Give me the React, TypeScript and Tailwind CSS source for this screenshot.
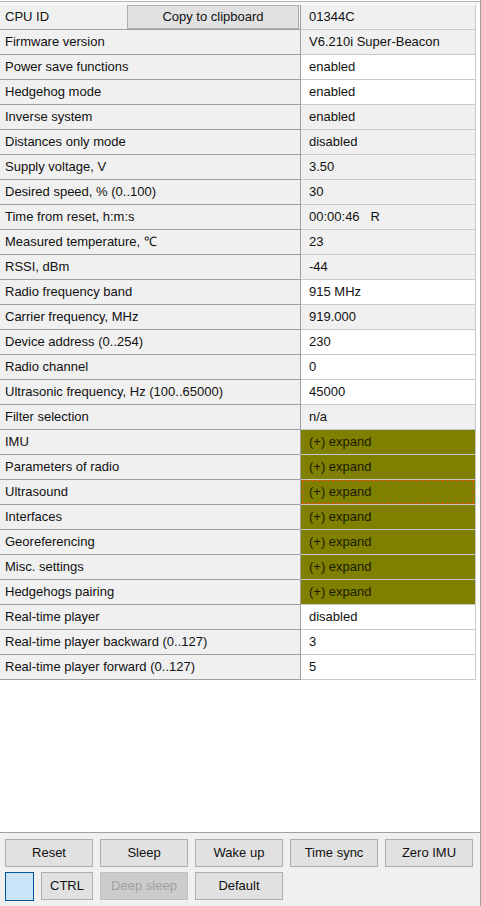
import React from "react";

type Row = {
  name: string;
  value: string;
  kind?: "white" | "gray" | "group";
  focus?: boolean;
};

const rows: Row[] = [
  { name: "Firmware version", value: "V6.210i Super-Beacon" },
  { name: "Power save functions", value: "enabled", kind: "white" },
  { name: "Hedgehog mode", value: "enabled", kind: "white" },
  { name: "Inverse system", value: "enabled" },
  { name: "Distances only mode", value: "disabled" },
  { name: "Supply voltage, V", value: "3.50" },
  { name: "Desired speed, % (0..100)", value: "30" },
  { name: "Time from reset, h:m:s", value: "00:00:46\u00a0\u00a0\u00a0R" },
  { name: "Measured temperature, \u2103", value: "23" },
  { name: "RSSI, dBm", value: "-44" },
  { name: "Radio frequency band", value: "915 MHz", kind: "white" },
  { name: "Carrier frequency, MHz", value: "919.000" },
  { name: "Device address (0..254)", value: "230", kind: "white" },
  { name: "Radio channel", value: "0", kind: "white" },
  { name: "Ultrasonic frequency, Hz (100..65000)", value: "45000", kind: "white" },
  { name: "Filter selection", value: "n/a" },
  { name: "IMU", value: "(+) expand", kind: "group" },
  { name: "Parameters of radio", value: "(+) expand", kind: "group" },
  { name: "Ultrasound", value: "(+) expand", kind: "group", focus: true },
  { name: "Interfaces", value: "(+) expand", kind: "group" },
  { name: "Georeferencing", value: "(+) expand", kind: "group" },
  { name: "Misc. settings", value: "(+) expand", kind: "group" },
  { name: "Hedgehogs pairing", value: "(+) expand", kind: "group" },
  { name: "Real-time player", value: "disabled", kind: "white" },
  { name: "Real-time player backward (0..127)", value: "3", kind: "white" },
  { name: "Real-time player forward (0..127)", value: "5", kind: "white" },
];

const valueBg = (kind?: Row["kind"]) => {
  if (kind === "white") return "bg-white";
  if (kind === "group") return "bg-[#808000]";
  return "bg-[#f0f0f0]";
};

const Btn = ({
  label,
  className = "w-[88px]",
  disabled,
}: {
  label: string;
  className?: string;
  disabled?: boolean;
}) => (
  <button
    className={`h-[28px] border flex items-center justify-center ${className} ${
      disabled
        ? "bg-[#cccccc] border-[#bfbfbf] text-[#a0a0a0]"
        : "bg-[#e1e1e1] border-[#adadad] text-[#111]"
    }`}
  >
    {label}
  </button>
);

export default function App() {
  return (
    <div
      className="w-[481px] h-[906px] flex flex-col bg-[#f0f0f0] border-r border-[#a0a0a0] text-[13px] text-[#111]"
      style={{ fontFamily: '"Liberation Sans", Arial, sans-serif' }}
    >
      {/* property grid */}
      <div className="h-[832px] bg-white pt-[1px]">
        <div className="border-t border-[#b4b4b4] pt-[3px] bg-[#f7f7f7]" />
        <div className="w-[476px] bg-white">
          <div className="flex h-[25px]">
            <div className="w-[301px] flex items-center bg-[#f0f0f0] border-b border-r border-[#a0a0a0] pl-[5px]">
              <span>CPU ID</span>
              <button className="ml-auto mr-[1px] w-[172px] h-[24px] bg-[#e1e1e1] border border-[#adadad] flex items-center justify-center">
                Copy to clipboard
              </button>
            </div>
            <div className="flex-1 flex items-center bg-[#f0f0f0] border-b border-r border-[#c8c8c8] pl-[8px]">
              01344C
            </div>
          </div>
          {rows.map((r, i) => (
            <div className="flex h-[25px]" key={i}>
              <div className="w-[301px] flex items-center bg-[#f0f0f0] border-b border-r border-[#a0a0a0] pl-[5px] whitespace-nowrap">
                {r.name}
              </div>
              <div
                className={`relative flex-1 flex items-center border-b border-r border-[#c8c8c8] pl-[8px] whitespace-nowrap ${valueBg(
                  r.kind
                )} ${r.kind === "group" ? "text-[#1a1a00]" : ""}`}
              >
                {r.value}
                {r.focus && (
                  <span className="absolute left-[1px] top-0 right-[1px] bottom-0 border-[1px] border-dashed border-[#e8501a]" />
                )}
              </div>
            </div>
          ))}
        </div>
      </div>

      {/* command buttons */}
      <div className="flex-1 border-t border-[#a0a0a0] pt-[6px] pl-[5px] flex flex-col gap-[5px]">
        <div className="flex gap-[7px]">
          <Btn label="Reset" />
          <Btn label="Sleep" />
          <Btn label="Wake up" />
          <Btn label="Time sync" />
          <Btn label="Zero IMU" />
        </div>
        <div className="flex gap-[7px]">
          <div className="w-[29px] h-[29px] bg-[#cce4f7] border border-[#005499]" />
          <Btn label="CTRL" className="w-[52px]" />
          <Btn label="Deep sleep" disabled />
          <Btn label="Default" />
        </div>
      </div>
    </div>
  );
}
